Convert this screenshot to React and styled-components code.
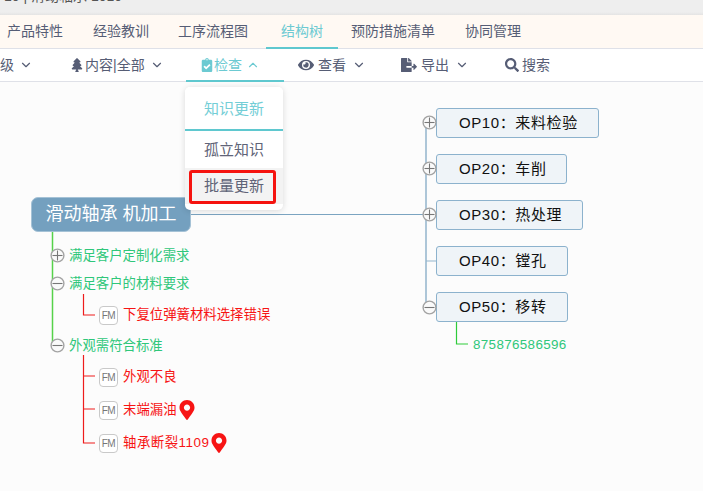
import React from "react";
import styled, { createGlobalStyle } from "styled-components";
import { FaTree, FaClipboardCheck, FaEye, FaFileExport, FaSearch, FaMapMarkerAlt } from "react-icons/fa";
import { LuChevronDown, LuChevronUp } from "react-icons/lu";

const GlobalStyle = createGlobalStyle`
  html, body {
    margin: 0;
    padding: 0;
    width: 703px;
    height: 491px;
    overflow: hidden;
    background: #fcfcfc;
    font-family: "Liberation Sans", "Noto Sans CJK SC", sans-serif;
  }
`;

const Page = styled.div`
  width: 703px;
  height: 491px;
  display: flex;
  flex-direction: column;
  overflow: hidden;
`;

const TitleBar = styled.div`
  height: 15px;
  background: linear-gradient(#eeeeee 80%, #e4e4e4);
  flex: none;
  overflow: hidden;
`;

const TitleText = styled.div`
  margin-top: -11px;
  padding-left: 4px;
  font-size: 14px;
  line-height: 15px;
  color: #555;
  white-space: nowrap;
`;

const TabBar = styled.div`
  height: 33px;
  background: #fff9f3;
  border-bottom: 1px solid #dfe1e8;
  display: flex;
  flex: none;
`;

const Tab = styled.div`
  margin-left: ${(p) => p.$shift || 0}px;
  padding: 0 15px;
  box-sizing: border-box;
  border-bottom: ${(p) => (p.$active ? "2px solid #5fc8cf" : "none")};
  height: ${(p) => (p.$active ? "34px" : "33px")};
  color: ${(p) => (p.$active ? "#6ccad2" : "#565d75")};
  font-size: 14px;
  line-height: 32px;
  white-space: nowrap;
`;

const ToolBar = styled.div`
  height: 32px;
  background: #fff;
  border-bottom: 1px solid #dfe1e8;
  display: flex;
  flex: none;
`;

const Tool = styled.div`
  width: ${(p) => p.$width}px;
  padding-left: ${(p) => p.$pad || 0}px;
  box-sizing: border-box;
  height: ${(p) => (p.$active ? "33px" : "32px")};
  border-bottom: ${(p) => (p.$active ? "2px solid #5fc8cf" : "none")};
  color: ${(p) => (p.$active ? "#6ccad2" : "#565d75")};
  display: flex;
  align-items: center;
  gap: ${(p) => p.$gap ?? 3}px;
  font-size: 14px;
  line-height: 32px;
  white-space: nowrap;
  svg {
    flex: none;
  }
`;

const Caret = styled.span`
  display: inline-flex;
  margin-left: ${(p) => p.$offset ?? 2}px;
`;

const Canvas = styled.div`
  position: relative;
  flex: 1;
  background: #fcfcfc;
`;

const Lines = styled.svg`
  position: absolute;
  left: 0;
  top: -82px;
  width: 703px;
  height: 491px;
`;

const Menu = styled.div`
  position: absolute;
  left: 185px;
  top: 5px;
  width: 98px;
  height: 123px;
  background: #fff;
  border-radius: 5px;
  box-shadow: 0 1px 6px rgba(0, 0, 0, 0.14);
  display: flex;
  flex-direction: column;
  overflow: hidden;
`;

const MenuItem = styled.div`
  height: ${(p) => p.$height}px;
  line-height: ${(p) => p.$height}px;
  text-align: center;
  font-size: 15px;
  flex: none;
  box-sizing: border-box;
  color: ${(p) => (p.$active ? "#74ced6" : "#5f6478")};
  border-bottom: ${(p) => (p.$active ? "2px solid #5fc8cf" : "none")};
  background: ${(p) => (p.$hover ? "#f3f3f3" : "#fff")};
`;

const Highlight = styled.div`
  position: absolute;
  left: 189px;
  top: 88px;
  width: 87px;
  height: 34px;
  box-sizing: border-box;
  border: 3px solid #f5130f;
  border-radius: 3px;
`;

const RootNode = styled.div`
  position: absolute;
  left: 31px;
  top: 115px;
  width: 160px;
  height: 35px;
  box-sizing: border-box;
  background: #74a0bf;
  border: 1px solid #a5c2d6;
  border-radius: 7px;
  color: #fff;
  font-size: 18px;
  line-height: 32px;
  text-align: center;
  white-space: nowrap;
`;

const OpNode = styled.div`
  position: absolute;
  left: 436px;
  top: ${(p) => p.$top}px;
  width: ${(p) => p.$width}px;
  height: 30px;
  box-sizing: border-box;
  padding-left: 22px;
  background: #eff4f8;
  border: 1px solid #8cb2cd;
  border-radius: 3px;
  color: #111;
  font-size: 15px;
  line-height: 27px;
  letter-spacing: 0.6px;
  white-space: nowrap;
`;

const Toggle = styled.svg`
  position: absolute;
  left: ${(p) => p.$left}px;
  top: ${(p) => p.$top}px;
  width: 15px;
  height: 15px;
`;

const Label = styled.div`
  position: absolute;
  left: ${(p) => p.$left}px;
  top: ${(p) => p.$top}px;
  height: 18px;
  line-height: 18px;
  font-size: 13.4px;
  letter-spacing: ${(p) => p.$spacing || 0}px;
  color: ${(p) => p.$color};
  white-space: nowrap;
  display: flex;
  align-items: center;
`;

const FmBadge = styled.div`
  position: absolute;
  left: 99px;
  top: ${(p) => p.$top}px;
  width: 19px;
  height: 19px;
  box-sizing: border-box;
  border: 1px solid #c9c9c9;
  border-radius: 4px;
  background: #fff;
  color: #777;
  font-size: 10px;
  letter-spacing: -0.5px;
  line-height: 17px;
  text-align: center;
`;

const chevron = <Caret><LuChevronDown size={14} /></Caret>;

function ToggleIcon({ left, top, open }) {
  return (
    <Toggle $left={left} $top={top} viewBox="0 0 15 15">
      <circle cx="7.5" cy="7.5" r="6.4" fill="#fafafa" stroke="#a3a3a3" strokeWidth="1.4" />
      <path d="M2.5 7.5H12.5" stroke="#777" strokeWidth="1.1" />
      {!open && <path d="M7.5 2.5V12.5" stroke="#777" strokeWidth="1.1" />}
    </Toggle>
  );
}

const ops = [
  { top: 26, width: 163, text: "OP10：来料检验" },
  { top: 72, width: 131, text: "OP20：车削" },
  { top: 118, width: 147, text: "OP30：热处理" },
  { top: 164, width: 132, text: "OP40：镗孔" },
  { top: 210, width: 132, text: "OP50：移转" },
];

export default function App() {
  return (
    <Page>
      <GlobalStyle />
      <TitleBar>
        <TitleText>10 | 滑动轴承 1010</TitleText>
      </TitleBar>
      <TabBar>
        <Tab $shift={-8}>产品特性</Tab>
        <Tab>经验教训</Tab>
        <Tab $shift={-1}>工序流程图</Tab>
        <Tab $shift={3} $active>结构树</Tab>
        <Tab $shift={-2}>预防措施清单</Tab>
        <Tab>协同管理</Tab>
      </TabBar>
      <ToolBar>
        <Tool $width={70}>级{chevron}</Tool>
        <Tool $width={116} $gap={1}><FaTree size={14} />内容|全部<Caret $offset={4}><LuChevronDown size={14} /></Caret></Tool>
        <Tool $width={98} $pad={14} $gap={0} $active><FaClipboardCheck size={14} />检查<Caret $offset={4}><LuChevronUp size={14} /></Caret></Tool>
        <Tool $width={117} $pad={14} $gap={4}><FaEye size={16} />查看{chevron}</Tool>
        <Tool $width={104} $gap={4}><FaFileExport size={16} />导出{chevron}</Tool>
        <Tool $width={72}><FaSearch size={14} />搜索</Tool>
      </ToolBar>
      <Canvas>
        <Lines viewBox="0 0 703 491" fill="none">
          <path d="M191 214.5H426" stroke="#7ba4c1" />
          <path d="M426 122V307" stroke="#93b5cd" strokeWidth="1.5" />
          <path d="M426 261H436" stroke="#93b5cd" />
          <path d="M52.5 232V346" stroke="#56d24a" strokeWidth="1.5" />
          <path d="M83.5 294V315H95" stroke="#ee1c1c" strokeWidth="1.2" />
          <path d="M83.5 355V443H95M83.5 376H95M83.5 409H95" stroke="#ee1c1c" strokeWidth="1.2" />
          <path d="M456.5 322V344H468" stroke="#2ecb3a" strokeWidth="1.2" />
        </Lines>
        <RootNode>滑动轴承 机加工</RootNode>
        {ops.map((op) => (
          <OpNode key={op.text} $top={op.top} $width={op.width}>{op.text}</OpNode>
        ))}
        <ToggleIcon left={422} top={33} />
        <ToggleIcon left={422} top={79} />
        <ToggleIcon left={422} top={125} />
        <ToggleIcon left={422} top={218} open />
        <ToggleIcon left={50} top={166} />
        <ToggleIcon left={50} top={194} open />
        <ToggleIcon left={50} top={256} open />
        <Label $left={69} $top={165} $color="#2fc77a">满足客户定制化需求</Label>
        <Label $left={69} $top={193} $color="#2fc77a">满足客户的材料要求</Label>
        <Label $left={69} $top={255} $color="#2fc77a">外观需符合标准</Label>
        <Label $left={473} $top={254} $color="#2fc77a" $spacing={0.35}>875876586596</Label>
        <FmBadge $top={224}>FM</FmBadge>
        <FmBadge $top={286}>FM</FmBadge>
        <FmBadge $top={319}>FM</FmBadge>
        <FmBadge $top={352}>FM</FmBadge>
        <Label $left={123} $top={224} $color="#f71414">下复位弹簧材料选择错误</Label>
        <Label $left={123} $top={286} $color="#f71414">外观不良</Label>
        <Label $left={123} $top={319} $color="#f71414">末端漏油<FaMapMarkerAlt size={20} /></Label>
        <Label $left={123} $top={352} $color="#f71414" $spacing={0.5}>轴承断裂1109<FaMapMarkerAlt size={20} /></Label>
        <Menu>
          <MenuItem $height={44} $active>知识更新</MenuItem>
          <MenuItem $height={37}>孤立知识</MenuItem>
          <MenuItem $height={36} $hover>批量更新</MenuItem>
        </Menu>
        <Highlight />
      </Canvas>
    </Page>
  );
}
